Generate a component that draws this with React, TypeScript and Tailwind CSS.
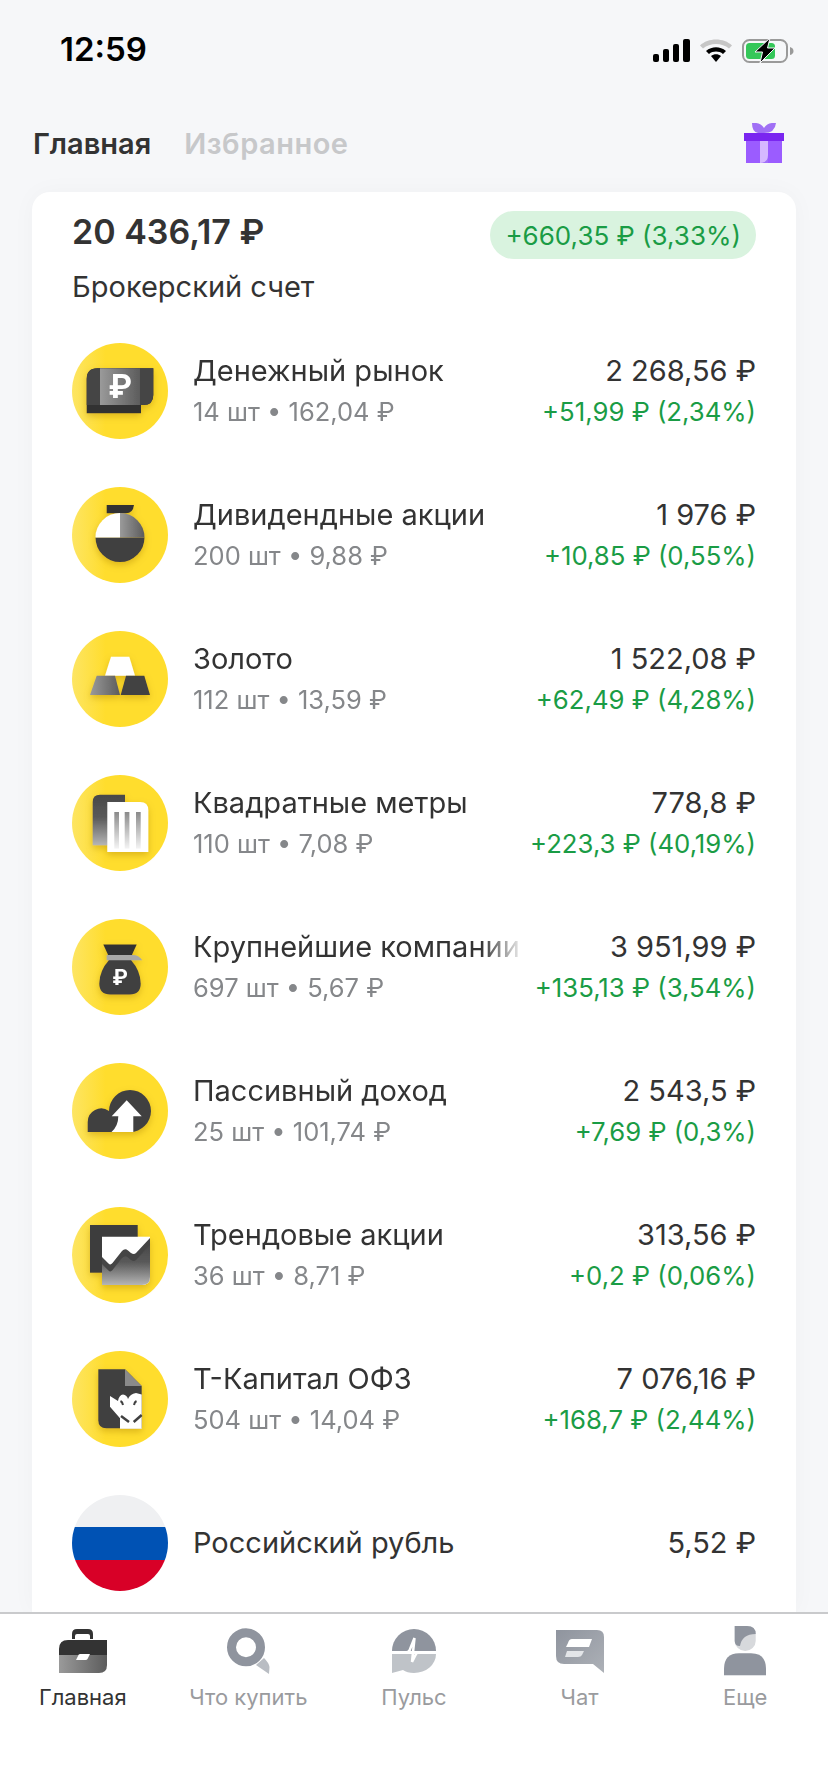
const sans = "font-['Inter','Noto_Sans',sans-serif]";

const holdings = [
  { name: "Денежный рынок", sub: "14 шт • 162,04 ₽", total: "2 268,56 ₽", gain: "+51,99 ₽ (2,34%)", Icon: MoneyIcon },
  { name: "Дивидендные акции", sub: "200 шт • 9,88 ₽", total: "1 976 ₽", gain: "+10,85 ₽ (0,55%)", Icon: DividendIcon },
  { name: "Золото", sub: "112 шт • 13,59 ₽", total: "1 522,08 ₽", gain: "+62,49 ₽ (4,28%)", Icon: GoldIcon },
  { name: "Квадратные метры", sub: "110 шт • 7,08 ₽", total: "778,8 ₽", gain: "+223,3 ₽ (40,19%)", Icon: MetersIcon },
  { name: "Крупнейшие компании", sub: "697 шт • 5,67 ₽", total: "3 951,99 ₽", gain: "+135,13 ₽ (3,54%)", Icon: BagIcon },
  { name: "Пассивный доход", sub: "25 шт • 101,74 ₽", total: "2 543,5 ₽", gain: "+7,69 ₽ (0,3%)", Icon: CloudIcon },
  { name: "Трендовые акции", sub: "36 шт • 8,71 ₽", total: "313,56 ₽", gain: "+0,2 ₽ (0,06%)", Icon: TrendIcon },
  { name: "Т-Капитал ОФЗ", sub: "504 шт • 14,04 ₽", total: "7 076,16 ₽", gain: "+168,7 ₽ (2,44%)", Icon: BondIcon },
];

function SharedDefs() {
  return (
    <svg className="absolute h-0 w-0" aria-hidden="true">
      <defs>
        <linearGradient id="yellow" x1="0" y1="0" x2="1" y2="0">
          <stop offset="0" stopColor="#fde563" />
          <stop offset="0.35" stopColor="#ffdd2d" />
          <stop offset="1" stopColor="#ffdd2d" />
        </linearGradient>
        <linearGradient id="darkH" x1="0" y1="0" x2="1" y2="0">
          <stop offset="0" stopColor="#9a9a9a" />
          <stop offset="1" stopColor="#5c5c5c" />
        </linearGradient>
        <linearGradient id="lightV" x1="0" y1="0" x2="0" y2="1">
          <stop offset="0" stopColor="#484848" />
          <stop offset="0.45" stopColor="#5a5a5a" />
          <stop offset="1" stopColor="#b5b5b5" />
        </linearGradient>
        <linearGradient id="fadeV" x1="0" y1="0" x2="0" y2="1">
          <stop offset="0" stopColor="#8a8a8a" />
          <stop offset="1" stopColor="#f4f4f4" />
        </linearGradient>
        <linearGradient id="tabGray" x1="0" y1="0" x2="1" y2="1">
          <stop offset="0" stopColor="#8f949e" />
          <stop offset="1" stopColor="#adb1b7" />
        </linearGradient>
        <filter id="soft" x="-30%" y="-30%" width="160%" height="170%">
          <feDropShadow dx="0" dy="3" stdDeviation="3.500" floodColor="#a67c00" floodOpacity="0.4" />
        </filter>
      </defs>
    </svg>
  );
}

function Coin({ children }: { children: React.ReactNode }) {
  return (
    <svg viewBox="0 0 96 96" className="h-24 w-24 shrink-0">
      <circle cx="48" cy="48" r="48" fill="url(#yellow)" />
      <g filter="url(#soft)">{children}</g>
    </svg>
  );
}

function RubleMark({ x, y, size }: { x: number; y: number; size: number }) {
  return (
    <text x={x} y={y} textAnchor="middle" fontSize={size} fontWeight="700" fill="#fff" fontFamily="Inter, sans-serif">
      ₽
    </text>
  );
}

function MoneyIcon() {
  return (
    <Coin>
      <path d="M14.700 70.300V36q0-10.700 10.700-10.700h55.900V52q0 10-10 10H69v8.300z" fill="#333" />
      <path d="M14.700 36q0-10.700 10.700-10.700h55.900V52q0 10-10 10H14.700z" fill="#454545" />
      <rect x="28" y="25.300" width="40" height="36.700" fill="url(#darkH)" />
      <RubleMark x={48} y={55} size={32} />
    </Coin>
  );
}

function DividendIcon() {
  return (
    <Coin>
      <path d="M34.700 18H62q-1 8.300-8 8.300H34.700z" fill="#333" />
      <path d="M23.500 50.500a24.500 24.500 0 0 0 49 0z" fill="#3f3f3f" />
      <path d="M48 26a24.500 24.500 0 0 0-24.500 24.500H48z" fill="#fff" />
      <path d="M48 26a24.500 24.500 0 0 1 24.500 24.500H48z" fill="url(#darkH)" />
    </Coin>
  );
}

function GoldIcon() {
  return (
    <Coin>
      <path d="M39 25.700h18.300L63 44.700H33z" fill="#fff" />
      <path d="M24.700 44.700H43L48 64H18z" fill="url(#darkH)" />
      <path d="M54 44.700h18.300L78 64H48.700z" fill="#424242" />
    </Coin>
  );
}

function MetersIcon() {
  return (
    <Coin>
      <path d="M20.700 70.300V27q0-7.300 7.300-7.300h25v50.600z" fill="url(#lightV)" />
      <path d="M35.300 27H68q8.300 0 8.300 8.300V77H35.300z" fill="#fff" />
      <rect x="42.300" y="37" width="4.700" height="36.600" fill="url(#fadeV)" />
      <rect x="52.700" y="37" width="4.700" height="36.600" fill="url(#fadeV)" />
      <rect x="64" y="37" width="4.700" height="36.600" fill="url(#fadeV)" />
    </Coin>
  );
}

function BagIcon() {
  return (
    <Coin>
      <path d="M31.300 25.600h33.400L59 38H37z" fill="#333" />
      <path d="M37 41h22q9.700 11 9.700 23.600 0 11-11 11H38.300q-11 0-11-11Q27.300 52 37 41z" fill="#414141" />
      <path d="M34.700 36h26q6 0 9.600 5.300H34.700z" fill="#a8a8a8" />
      <RubleMark x={48} y={66} size={21} />
    </Coin>
  );
}

function CloudIcon() {
  return (
    <Coin>
      <path d="M15.700 69V59a13.500 13.500 0 0 1 21.300-11A21 21 0 1 1 58 69z" fill="#414141" />
      <path d="M54.700 37.300l15 16H61.300V69H39.500q6.800-6 6.800-15.700h-6.600z" fill="#fff" />
    </Coin>
  );
}

function TrendIcon() {
  return (
    <Coin>
      <rect x="18" y="18" width="47.700" height="47.700" fill="#3d3d3d" />
      <path d="M30 29.700h48V70q0 8-8 8H30z" fill="#fff" />
      <path d="M30 56l6.500 6.500q2 2 4-.5L50 50q3-3 6-.5l3 2.500q3 2 5 0l14-15V70q0 8-8 8H30z" fill="url(#lightV)" />
      <path d="M30 50l6.500 6.500q2 2 4-.5L50 44q3-3 6-.5l3 2.500q3 2 5 0l14-15v7L64 53q-2 2-5 0l-3-2.500q-3-2.500-6 .5l-9.500 12q-2 2.500-4 .5L30 57z" fill="#444" />
    </Coin>
  );
}

function BondIcon() {
  return (
    <Coin>
      <path d="M26.300 18.300H53l16.700 16.700v42.300H34.300q-8 0-8-8z" fill="#414141" />
      <path d="M53 18.300L69.700 35H53z" fill="#8a8a8a" />
      <path d="M38 45l8 5q1-6 5-6.500 4 .5 5 4.500 2-5 8-6l5.700 1.500v34.300H48V67.300L38 55.700z" fill="#fff" />
      <path d="M48.500 50q2 1 2.500 4M64.500 50q-2 1-2.500 4" fill="none" stroke="#414141" strokeWidth="2" />
      <path d="M49 65l8 6M69.700 64l-8 7" fill="none" stroke="#414141" strokeWidth="2.500" />
    </Coin>
  );
}

function FlagIcon() {
  return (
    <svg viewBox="0 0 96 96" className="h-24 w-24 shrink-0">
      <clipPath id="flagClip">
        <circle cx="48" cy="48" r="48" />
      </clipPath>
      <g clipPath="url(#flagClip)">
        <rect width="96" height="32" fill="#eff0f2" />
        <rect y="32" width="96" height="33" fill="#0052b4" />
        <rect y="65" width="96" height="31" fill="#d80027" />
      </g>
    </svg>
  );
}

function GiftIcon() {
  return (
    <svg viewBox="0 0 40 40" className="h-10 w-10">
      <path d="M8 0q8-1 12 5 4-6 12-5-1 10-12 10H14Q8 9 8 0z" fill="#a070f5" />
      <rect x="2" y="10" width="36" height="30" fill="#9b5cff" />
      <path d="M16 12h8v28h-8z" fill="#d6b8ff" />
      <path d="M16 40q8 0 8-8v8z" fill="#a06ffa" />
      <path d="M38 12v20q0 8-8 8h-6V12z" fill="#9b5cff" />
      <rect y="10" width="40" height="8" fill="#7a26f0" />
    </svg>
  );
}

function StatusIcons() {
  return (
    <div className="flex items-center gap-[10px]">
      <svg viewBox="0 0 37 23" className="h-[23px] w-[37px]">
        <rect x="0" y="15" width="6" height="8" rx="2" />
        <rect x="10" y="10" width="6" height="13" rx="2" />
        <rect x="20" y="5" width="6" height="18" rx="2" />
        <rect x="30" y="0" width="7" height="23" rx="2" />
      </svg>
      <svg viewBox="0 0 32 24" className="h-6 w-8">
        <path d="M0 7.500C8-.5 24-.5 32 7.500l-3 3C22 4.500 10 4.500 3 10.500z" fill="#c6c6c6" />
        <path d="M6 13c6-5 14-5 20 0l-3 3c-4-3.200-10-3.200-14 0z" />
        <path d="M11 18c3-2.200 7-2.200 10 0l-5 6z" />
      </svg>
      <svg viewBox="0 0 52 25" className="h-[25px] w-[52px]">
        <rect x="1" y="2" width="44" height="22" rx="6.500" fill="none" stroke="#9a9a9a" strokeWidth="2" />
        <rect x="4" y="5" width="29" height="16" rx="3.500" fill="#34c759" />
        <path d="M48 9q3.500 1 3.500 4T48 17z" fill="#9a9a9a" />
        <path d="M28 0L13 14h7.500L18 25 33 10h-7.500z" stroke="#f6f7f9" strokeWidth="1" />
      </svg>
    </div>
  );
}

function BriefcaseTab() {
  return (
    <svg viewBox="0 0 48 44" className="h-[44px] w-12">
      <path d="M13 10V5q0-5 5-5h11q5 0 5 5v5h-3V7q0-2-2-2H18q-2 0-2 2v3z" fill="#333" />
      <path d="M9 11h39v15H0v-6q0-9 9-9z" fill="#333" />
      <path d="M0 26h48v10q0 8-8 8H0z" fill="url(#darkH)" />
      <path d="M21 25h10l-2.500 5q-.5 1-2 1H17l2-4q.5-2 2-2z" fill="#fff" />
    </svg>
  );
}

function SearchTab() {
  return (
    <svg viewBox="0 0 43 46" className="h-[46px] w-[43px]">
      <path d="M29 37l8-7q5 5 5.500 9L42 46z" fill="#b9bdc3" />
      <circle cx="19" cy="19.300" r="14.500" fill="none" stroke="#8f949e" strokeWidth="9" />
    </svg>
  );
}

function PulseTab() {
  return (
    <svg viewBox="0 0 44 44" className="h-11 w-11">
      <path d="M0 22a22 22 0 0 1 44 0z" fill="#8f949e" />
      <path d="M0 25h44a22 19 0 0 1-22 19q-7 0-11-3l-11 3z" fill="#bfc3c8" />
      <path d="M0 23.300h14.500q2.500 0 3.500-3L22.500 9 20 33l3.500-7q1-2.700 3.500-2.700h17" fill="none" stroke="#fff" strokeWidth="2.500" />
    </svg>
  );
}

function ChatTab() {
  return (
    <svg viewBox="0 0 48 43" className="h-[43px] w-12">
      <path d="M0 0h41q7 0 7 7v36l-11-9H8q-8 0-8-8z" fill="url(#tabGray)" />
      <path d="M16 9h20l-3 8H10l2-4q1-4 4-4z" fill="#fff" />
      <path d="M11 21h17l-2 4q-1 2-4 2H9z" fill="#e3e5e8" />
    </svg>
  );
}

function UserTab() {
  return (
    <svg viewBox="0 0 42 50" className="h-[50px] w-[42px]">
      <path d="M10.700 0H23q8.700 0 8.700 8v7a10.500 10 0 0 1-21 0z" fill="#d7d9dc" />
      <path d="M10.700 0H23q8.700 0 8.700 8Q18 8 16 20q-5.300 0-5.300-5z" fill="#8f949e" />
      <path d="M0 49v-6q0-15.700 15-15.700h12q15 0 15 15.700v6z" fill="#8f949e" />
      <rect y="49" width="42" height="1" fill="#dfe1e4" />
    </svg>
  );
}

const tabs = [
  { label: "Главная", Icon: BriefcaseTab, active: true },
  { label: "Что купить", Icon: SearchTab, active: false },
  { label: "Пульс", Icon: PulseTab, active: false },
  { label: "Чат", Icon: ChatTab, active: false },
  { label: "Еще", Icon: UserTab, active: false },
];

function Row({ name, sub, total, gain, Icon }: (typeof holdings)[number]) {
  return (
    <div className="flex h-36 items-center">
      <Icon />
      <div className="ml-[25px] flex min-w-0 flex-1 justify-between gap-[10px]">
        <div className="min-w-0 flex-1 overflow-hidden whitespace-nowrap [mask-image:linear-gradient(to_left,transparent,black_44px)]">
          <div className="text-[29px] leading-[41px] text-[#333333]">{name}</div>
          <div className="text-[25.5px] leading-[41px] text-[#85878a]">{sub}</div>
        </div>
        <div className="shrink-0 whitespace-nowrap text-right">
          <div className="text-[29px] leading-[41px] text-[#333333]">{total}</div>
          <div className="text-[25.75px] leading-[41px] text-[#1a9c45]">{gain}</div>
        </div>
      </div>
    </div>
  );
}

export default function App() {
  return (
    <div className={`flex h-[1792px] w-[828px] flex-col overflow-hidden bg-[#f6f7f9] ${sans}`}>
      <SharedDefs />

      <div className="flex h-[100px] shrink-0 items-center justify-between pl-[60px] pr-[34px]">
        <span className="text-[33px] font-semibold text-black">12:59</span>
        <StatusIcons />
      </div>

      <div className="flex h-[92px] shrink-0 items-center justify-between pb-[6px] pl-[33px] pr-[44px]">
        <div className="mt-[2px] flex gap-[33px] text-[29px] font-semibold">
          <span className="text-[#333333]">Главная</span>
          <span className="tracking-[0.5px] text-[#c7c8ca]">Избранное</span>
        </div>
        <GiftIcon />
      </div>

      <main className="mx-8 min-h-0 flex-1 overflow-hidden rounded-t-[18px] bg-white px-10 shadow-[0_0_24px_rgba(0,0,0,0.03)]">
        <div className="flex items-start justify-between pt-[19px]">
          <div className="text-[34px] font-semibold leading-[42px] text-[#333333]">20 436,17 ₽</div>
          <div className="flex h-12 items-center rounded-full bg-[#d9f3df] px-[15px] text-[26px] text-[#1a9c45]">
            +660,35 ₽ (3,33%)
          </div>
        </div>
        <div className="mb-[12px] mt-[8px] text-[29px] leading-10 text-[#333333]">Брокерский счет</div>
        {holdings.map((h) => (
          <Row key={h.name} {...h} />
        ))}
        <div className="flex h-36 items-center">
          <FlagIcon />
          <div className="ml-[25px] flex flex-1 justify-between text-[29px] text-[#333333]">
            <span>Российский рубль</span>
            <span>5,52 ₽</span>
          </div>
        </div>
      </main>

      <nav className="grid h-[180px] shrink-0 grid-cols-5 border-t-2 border-[#c9cacc] bg-white">
        {tabs.map((t) => (
          <div key={t.label} className="flex h-[97px] flex-col items-center justify-between pt-[12px]">
            <div className="flex h-[50px] items-center">
              <t.Icon />
            </div>
            <span className={`text-[22px] leading-7 ${t.active ? "text-[#333333]" : "text-[#9a9b9e]"}`}>{t.label}</span>
          </div>
        ))}
      </nav>
    </div>
  );
}
